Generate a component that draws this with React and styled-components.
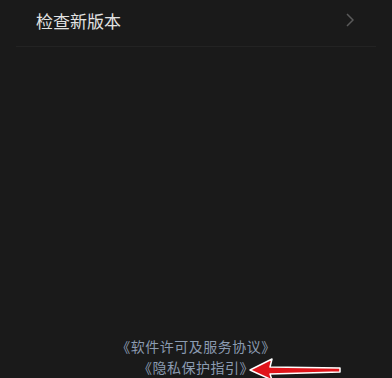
import React from "react";
import styled, { createGlobalStyle } from "styled-components";

const Global = createGlobalStyle`
  html, body { margin: 0; padding: 0; background: #1a1a1a; }
  body { font-family: "Noto Sans CJK SC", "Noto Sans", sans-serif; }
`;

const Page = styled.div`
  width: 392px;
  height: 378px;
  background: #1a1a1a;
  display: flex;
  flex-direction: column;
  position: relative;
  overflow: hidden;
`;

const Row = styled.div`
  margin: 0 16px;
  height: 47px;
  border-bottom: 1px solid #232323;
  display: flex;
  align-items: center;
  justify-content: space-between;
  padding: 0 22px 6px 20px;
  box-sizing: border-box;
`;

const RowLabel = styled.span`
  font-size: 17px;
  color: #e2e2e2;
  line-height: 1;
`;

const Footer = styled.div`
  margin-top: auto;
  display: flex;
  flex-direction: column;
  align-items: center;
  padding-bottom: 0;
`;

const LinkText = styled.span`
  font-size: 14px;
  line-height: 21px;
  color: ${(p) => p.$color || "#8b9bb1"};
  letter-spacing: 0.5px;
`;

const Arrow = styled.svg`
  position: absolute;
  left: 248px;
  top: 356px;
`;

export default function App() {
  return (
    <>
      <Global />
      <Page>
        <Row>
          <RowLabel>检查新版本</RowLabel>
          <svg width="8" height="14" viewBox="0 0 8 14">
            <path d="M1 1 L7 7 L1 13" fill="none" stroke="#5a5a5a" strokeWidth="1.5" />
          </svg>
        </Row>
        <Footer>
          <LinkText>《软件许可及服务协议》</LinkText>
          <LinkText>《隐私保护指引》</LinkText>
        </Footer>
        <Arrow width="96" height="24" viewBox="0 0 96 24">
          <path
            d="M2 14 L24 3 L22 11 L92 12 L92 16 L22 18 L24 24 Z"
            fill="#e0141a"
            stroke="#ffffff"
            strokeWidth="1.5"
            strokeLinejoin="round"
          />
        </Arrow>
      </Page>
    </>
  );
}
